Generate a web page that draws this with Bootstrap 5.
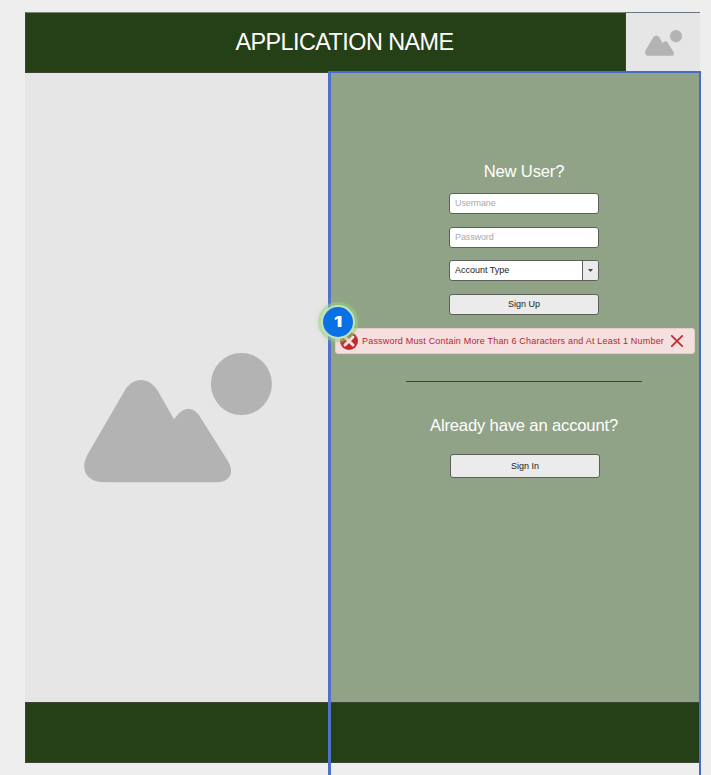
<!DOCTYPE html>
<html lang="en">
<head>
<meta charset="utf-8">
<meta name="viewport" content="width=device-width, initial-scale=1">
<title>Application Name</title>
<link href="https://cdn.jsdelivr.net/npm/bootstrap@5.3.0/dist/css/bootstrap.min.css" rel="stylesheet">
<style>
body{background:#eee;font-family:"Liberation Sans",Arial,sans-serif;height:775px;overflow:hidden}
.frame{width:675px;margin-left:25px;padding-top:12px}
.bar{background:#253f17;border:1px solid #3a4534}
.topbar{height:61px;border-top-color:#7d8877}
.app-title{font-size:23.4px;line-height:58px;letter-spacing:-.56px;color:#fff;padding-left:38px}
.logo-box{width:74px;background:#e6e6e6}
.main-area{height:629px}
.hero{width:305px;background:#e6e6e6;padding:280px 0 0 59px}
.panel{background:#91a387;padding-top:87px}
.form-col{width:150px;margin-left:119px}
.heading{font-size:16.6px;line-height:24px;letter-spacing:-.16px;color:#fff;white-space:nowrap}
.field{height:21px;min-height:0;font-size:9px;line-height:12px;padding:3px 5px;border:1px solid #5c6058;border-radius:3px;color:#222;background:#fff}
.field.form-control{padding:2px 5px 4px}
.field::placeholder{color:#aaa;opacity:1;letter-spacing:-.12px}
.field.btn{background:#ebebeb;padding:2px 3px 4px}
.first{margin-top:9px}
.second{margin-top:13px}
.select-field{margin-top:12px}
.select-label{padding:4px 0 0 5px;line-height:11px}
.arrow-box{width:16px;background:#ebebeb;border-left:1px solid #5c6058;border-radius:0 2px 2px 0}
.error-box{width:360px;height:26px;margin:13px 0 0 5px;padding:0 11px 0 4px;background:#f5dfdf;border:1px solid #e3cfca;border-radius:3px;color:#b4282d;font-size:9px}
.error-text{letter-spacing:.19px;padding-top:1px;margin-left:4px}
.rule{width:236px;height:1px;background:#35452f;margin:27px 0 0 76px}
.signin-title{margin:32px 0 15px}
.field.signin{height:24px;margin-left:1px;padding:3px}
.footer-bar{height:61px}
.selection{left:328px;top:71px;width:373px;height:720px;border:2px solid #476bc9;border-left:3px solid #4f72c8}
.marker{left:323px;top:307px;width:30px;height:30px;background:#0a70e6;color:#fff;box-shadow:0 0 0 2px #c5e2b8,0 0 0 5px rgba(150,210,135,.5),0 0 5px 6px rgba(150,210,135,.2)}
.marker-number{display:block;font:900 15px/30px Inter,sans-serif;transform:scaleX(1.2)}
</style>
<script src="https://cdn.jsdelivr.net/npm/bootstrap@5.3.0/dist/js/bootstrap.bundle.min.js"></script>
</head>
<body class="position-relative">
<svg class="d-none"><symbol id="scene" viewBox="0 0 188 130" preserveAspectRatio="none"><path d="M4.300 100.300 41 37C49 23.500 65 23.500 73.300 37L90 66.300 94.300 61C101 54 110 54 116 63.700L144.300 108.700C151 120 145 129.300 133 129.300H21C3 129.300-5.500 117 4.300 100.300Z"/><ellipse cx="157.400" cy="31" rx="30.500" ry="31"/></symbol></svg>
<div class="frame">
  <header class="d-flex">
    <div class="bar topbar flex-grow-1 text-center"><h1 class="app-title m-0 fw-normal">APPLICATION NAME</h1></div>
    <div class="logo-box d-flex align-items-center justify-content-center border-top border-secondary"><svg width="37" height="26" fill="#b3b3b3"><use href="#scene"/></svg></div>
  </header>
  <main class="main-area d-flex">
    <section class="hero flex-shrink-0"><svg class="d-block" width="188" height="130" fill="#b3b3b3"><use href="#scene"/></svg></section>
    <section class="panel flex-grow-1">
      <form class="form-col d-flex flex-column">
        <h2 class="heading text-center m-0 fw-normal">New User?</h2>
        <input class="field form-control first" placeholder="Usermane" aria-label="Username">
        <input class="field form-control second" type="text" placeholder="Password" aria-label="Password">
        <div class="field select-field d-flex p-0" role="button"><span class="select-label flex-grow-1">Account Type</span><span class="arrow-box d-flex align-items-center justify-content-center"><svg width="5" height="3"><path d="M0 0h5L2.500 3z" fill="#444"/></svg></span></div>
        <button class="field btn second" type="button">Sign Up</button>
      </form>
      <div class="error-box d-flex align-items-center" role="alert">
        <svg class="flex-shrink-0" width="18" height="18" viewBox="0 0 18 18"><circle cx="9" cy="9" r="9" fill="#bd2c30"/><path d="m5 5 8 8m0-8-8 8" stroke="#f8e4e0" stroke-width="3" stroke-linecap="round"/></svg>
        <span class="error-text text-nowrap">Password Must Contain More Than 6 Characters and At Least 1 Number</span>
        <svg class="ms-auto flex-shrink-0" width="12" height="12" viewBox="0 0 12 12"><path d="m.8.8 10.400 10.400m0-10.400L.8 11.200" stroke="#bd2c30" stroke-width="1.700" stroke-linecap="round"/></svg>
      </div>
      <div class="rule"></div>
      <div class="form-col">
        <h2 class="heading signin-title fw-normal d-flex justify-content-center">Already have an account?</h2>
        <button class="field signin btn w-100" type="button">Sign In</button>
      </div>
    </section>
  </main>
  <footer class="bar footer-bar"></footer>
</div>
<div class="selection position-absolute"></div>
<div class="marker position-absolute rounded-circle text-center"><span class="marker-number">1</span></div>
</body>
</html>
